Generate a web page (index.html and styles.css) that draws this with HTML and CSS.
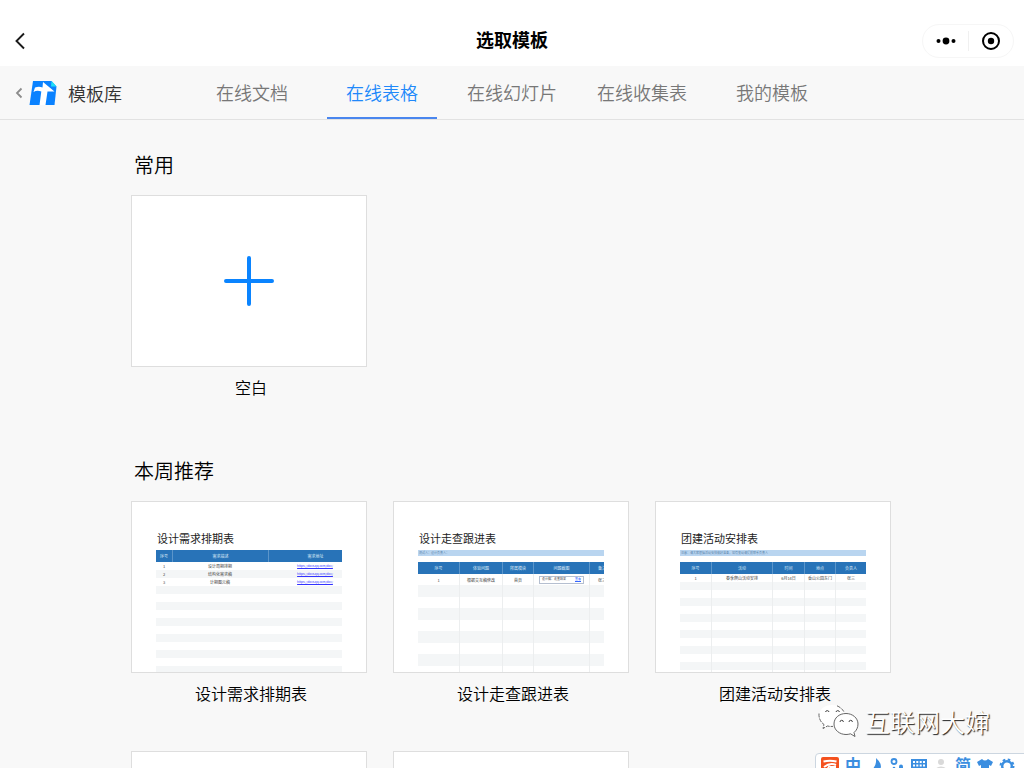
FILE: index.html
```
<!DOCTYPE html>
<html lang="zh-CN">
<head>
<meta charset="utf-8">
<meta name="viewport" content="width=device-width, initial-scale=1">
<title>选取模板</title>
<link rel="stylesheet" href="styles.css">
</head>
<body>
<div class="app">
  <header class="titlebar">
    <button class="back" type="button" aria-label="返回">
      <svg width="12" height="18" viewBox="0 0 12 18"><path d="M10 1.500L2.500 9L10 16.500" fill="none" stroke="#1a1a1a" stroke-width="1.900"/></svg>
    </button>
    <h1 class="title">选取模板</h1>
    <div class="capsule">
      <button type="button" aria-label="更多">
        <svg width="20" height="10" viewBox="0 0 20 10"><circle cx="2.500" cy="5" r="2"/><circle cx="10" cy="5" r="3.400"/><circle cx="17.500" cy="5" r="2"/></svg>
      </button>
      <button type="button" aria-label="关闭">
        <svg width="20" height="20" viewBox="0 0 20 20"><circle cx="10" cy="10" r="8" fill="none" stroke="#000" stroke-width="2"/><circle cx="10" cy="10" r="3.200"/></svg>
      </button>
    </div>
  </header>

  <nav class="tabbar">
    <a class="library" href="#">
      <svg width="8" height="12" viewBox="0 0 8 12"><path d="M6.500 1.500L2 6L6.500 10.500" fill="none" stroke="#8c8c8c" stroke-width="1.800"/></svg>
      <svg width="28" height="24" viewBox="0 0 28 24"><path d="M4 0H22.500L27.500 5.500L25.500 24H0.500Z" fill="#0a82ff"/><path d="M22.500 0L27.500 5.500H22Z" fill="#1fe0f5"/><path d="M14 1L25.500 10.500H18.500L16.500 24H10.500L12.300 10.500Q8 8.800 4.500 11L6 6.500Q10 5 13.500 6.500Z" fill="#fff"/></svg>
      <span>模板库</span>
    </a>
    <div class="tabs">
      <a class="tab" href="#">在线文档</a>
      <a class="tab active" href="#">在线表格</a>
      <a class="tab" href="#">在线幻灯片</a>
      <a class="tab" href="#">在线收集表</a>
      <a class="tab" href="#">我的模板</a>
    </div>
  </nav>

  <main class="content">
    <section class="group">
      <h2 class="heading">常用</h2>
      <div class="cards">
        <a class="card" href="#">
          <div class="thumb blank"><svg width="50" height="50" viewBox="0 0 50 50"><path d="M25 2V48M2 25H48" stroke="#0a84ff" stroke-width="4" stroke-linecap="round"/></svg></div>
          <span class="name">空白</span>
        </a>
      </div>
    </section>

    <section class="group">
      <h2 class="heading">本周推荐</h2>
      <div class="cards">
        <a class="card" href="#">
          <div class="thumb">
            <div class="sheet-title">设计需求排期表</div>
            <table class="sheet plan">
              <colgroup><col class="w16"><col class="w96"><col></colgroup>
              <thead><tr><th>序号</th><th>需求描述</th><th>需求地址</th></tr></thead>
              <tbody>
                <tr><td>1</td><td>设计周期排期</td><td><u>https://docs.qq.com/doc/</u></td></tr>
                <tr><td>2</td><td>结构化需求稿</td><td><u>https://docs.qq.com/doc/</u></td></tr>
                <tr><td>3</td><td>计期图元稿</td><td><u>https://docs.qq.com/doc/</u></td></tr>
                <tr><td></td><td></td><td></td></tr><tr><td></td><td></td><td></td></tr>
                <tr><td></td><td></td><td></td></tr><tr><td></td><td></td><td></td></tr>
                <tr><td></td><td></td><td></td></tr><tr><td></td><td></td><td></td></tr>
                <tr><td></td><td></td><td></td></tr><tr><td></td><td></td><td></td></tr>
                <tr><td></td><td></td><td></td></tr><tr><td></td><td></td><td></td></tr>
                <tr><td></td><td></td><td></td></tr>
              </tbody>
            </table>
          </div>
          <span class="name">设计需求排期表</span>
        </a>
        <a class="card" href="#">
          <div class="thumb">
            <div class="sheet-title">设计走查跟进表</div>
            <div class="note">测试人：设计负责人：</div>
            <table class="sheet lined tall">
              <colgroup><col class="w41"><col class="w43"><col class="w31"><col class="w56"><col></colgroup>
              <thead><tr><th>序号</th><th>体验问题</th><th>所属模块</th><th>问题截图</th><th>备注</th></tr></thead>
              <tbody>
                <tr><td>1</td><td>根据交互稿修改</td><td>首页</td><td><div class="shot"><span>设计稿：走查结果</span><u>查看</u></div></td><td>张三</td></tr>
                <tr><td></td><td></td><td></td><td></td><td></td></tr><tr><td></td><td></td><td></td><td></td><td></td></tr>
                <tr><td></td><td></td><td></td><td></td><td></td></tr><tr><td></td><td></td><td></td><td></td><td></td></tr>
                <tr><td></td><td></td><td></td><td></td><td></td></tr><tr><td></td><td></td><td></td><td></td><td></td></tr>
                <tr><td></td><td></td><td></td><td></td><td></td></tr><tr><td></td><td></td><td></td><td></td><td></td></tr>
              </tbody>
            </table>
          </div>
          <span class="name">设计走查跟进表</span>
        </a>
        <a class="card" href="#">
          <div class="thumb">
            <div class="sheet-title">团建活动安排表</div>
            <div class="note">注意：请大家根据活动安排做好准备，如有变动请提前联系负责人</div>
            <table class="sheet lined">
              <colgroup><col class="w31"><col class="w61"><col class="w32"><col class="w31"><col></colgroup>
              <thead><tr><th>序号</th><th>活动</th><th>时间</th><th>地点</th><th>负责人</th></tr></thead>
              <tbody>
                <tr><td>1</td><td>春季爬山活动安排</td><td>6月14日</td><td>香山公园东门</td><td>张三</td></tr>
                <tr><td></td><td></td><td></td><td></td><td></td></tr><tr><td></td><td></td><td></td><td></td><td></td></tr>
                <tr><td></td><td></td><td></td><td></td><td></td></tr><tr><td></td><td></td><td></td><td></td><td></td></tr>
                <tr><td></td><td></td><td></td><td></td><td></td></tr><tr><td></td><td></td><td></td><td></td><td></td></tr>
                <tr><td></td><td></td><td></td><td></td><td></td></tr><tr><td></td><td></td><td></td><td></td><td></td></tr>
                <tr><td></td><td></td><td></td><td></td><td></td></tr><tr><td></td><td></td><td></td><td></td><td></td></tr>
                <tr><td></td><td></td><td></td><td></td><td></td></tr><tr><td></td><td></td><td></td><td></td><td></td></tr>
              </tbody>
            </table>
          </div>
          <span class="name">团建活动安排表</span>
        </a>
        <a class="card" href="#" aria-label="模板"><div class="thumb"></div></a>
        <a class="card" href="#" aria-label="模板"><div class="thumb"></div></a>
      </div>
    </section>
  </main>

  <div class="watermark">
    <svg width="42" height="34" viewBox="0 0 42 34" fill="#fff" stroke="#555" stroke-width="0.900">
      <path d="M14 1C6.500 1 1 5.500 1 12C1 15.500 3 18.500 6 20.500L5 24.500L9.500 22C11 22.400 13 22.600 14.500 22.500C22 22.500 27 17.500 27 12C27 5.500 21 1 14 1Z" stroke="none"/>
      <path d="M1 9.500C0.600 14.500 3 18.500 6 20.500L5 24.500L9.500 22C11.500 22.500 13 22.500 15 22.400M19 1.800Q24 4 26 8" fill="none" stroke-dasharray="4 1"/>
      <path d="M28 9.500C21 9.500 16 14 16 20C16 26 21.500 30.500 28 30.500C29.500 30.500 31 30.300 32.500 29.800L37 32.500L36 28.500C38.500 26.500 40 23.500 40 20C40 14 34.500 9.500 28 9.500Z"/>
      <path d="M7.500 8A1.800 1.800 0 0 1 11 8M18 8A1.800 1.800 0 0 1 21.500 8M22 18A1.700 1.700 0 0 1 25.400 18M31 18A1.700 1.700 0 0 1 34.400 18" fill="none" stroke="#333"/>
    </svg>
    <span>互联网大婶</span>
  </div>

  <div class="ime">
    <svg width="18" height="18" viewBox="0 0 18 18"><rect width="18" height="18" rx="2" fill="#f4511e"/><path d="M2.500 4.500Q9 3 15.500 4.500M3 10Q9 5.500 15 8M8.500 8Q8 12 3 14M9 10H14Q14 13 11 14" fill="none" stroke="#fff" stroke-width="2"/></svg>
    <span>中</span>
    <svg width="16" height="18" viewBox="0 0 16 18"><path d="M9 1Q17 8 12 14Q8 18 1 14Q10 12 9 1Z"/></svg>
    <svg width="16" height="18" viewBox="0 0 16 18"><circle cx="5" cy="4.500" r="2.500" fill="none" stroke="#3b8ee0" stroke-width="1.800"/><circle cx="12" cy="9.500" r="2"/><path d="M10 10H14Q14 13 10.500 14Z"/><circle cx="5" cy="11" r="1.300"/></svg>
    <svg width="16" height="18" viewBox="0 0 16 18"><path fill-rule="evenodd" d="M0 2H16V14H0ZM2 4V6H4V4ZM5.300 4V6H7.300V4ZM8.700 4V6H10.700V4ZM12 4V6H14V4ZM2 7.500V9.500H4V7.500ZM5.300 7.500V9.500H7.300V7.500ZM8.700 7.500V9.500H10.700V7.500ZM12 7.500V9.500H14V7.500ZM4 11V12.500H12V11Z"/></svg>
    <svg width="16" height="18" viewBox="0 0 16 18"><g fill="#d9d9d9"><circle cx="8" cy="5" r="3"/><path d="M2 15Q2 9.500 8 9.500T14 15Z"/></g></svg>
    <span>简</span>
    <svg width="16" height="18" viewBox="0 0 16 18"><path d="M5 2Q8 5 11 2L16 5L14 9L12 8V16H4V8L2 9L0 5Z"/></svg>
    <svg width="16" height="18" viewBox="0 0 16 18"><circle cx="8" cy="9" r="4.800" fill="none" stroke="#3b8ee0" stroke-width="2.400"/><circle cx="8" cy="9" r="6.500" fill="none" stroke="#3b8ee0" stroke-width="2" stroke-dasharray="2.600 2.500"/></svg>
  </div>
</div>
</body>
</html>
```
FILE: styles.css
```
* { box-sizing: border-box; }
body {
  margin: 0;
  background: #f8f8f8;
  color: #000;
  font-family: "Noto Sans CJK SC", sans-serif;
  font-weight: 350;
}
a { color: inherit; text-decoration: none; }
button { border: 0; padding: 0; background: none; display: flex; align-items: center; justify-content: center; }
svg { display: block; flex: none; }
.app { height: 100vh; overflow: hidden; display: flex; flex-direction: column; position: relative; }

.titlebar {
  flex: none;
  height: 66px;
  padding: 15px 10px 0 12px;
  background: #fff;
  display: grid;
  grid-template-columns: 1fr auto 1fr;
  align-items: center;
}
.back { justify-self: start; width: 16px; height: 24px; }
.title { margin: 0; padding: 0 2px 4px 0; font-size: 18px; line-height: 24px; font-weight: 700; color: #000; }
.capsule {
  justify-self: end;
  width: 92px;
  height: 34px;
  border: 1px solid #f6f6f6;
  border-radius: 17px;
  display: grid;
  grid-template-columns: 1fr 1fr;
  align-items: center;
}
.capsule button { height: 20px; }
.capsule button + button { border-left: 1px solid #f0f0f0; }

.tabbar {
  flex: none;
  height: 54px;
  border-bottom: 1px solid #e2e2e2;
  display: flex;
}
.library {
  width: 187px;
  padding-left: 15px;
  display: flex;
  align-items: center;
  gap: 6px;
  font-size: 18px;
  color: #333;
}
.library span { padding-left: 5px; }
.tabs { display: flex; }
.tab {
  width: 110px;
  margin: 0 10px;
  border-bottom: 2px solid transparent;
  font-size: 18px;
  line-height: 52px;
  text-align: center;
  color: #777;
}
.tab.active { color: #2088fa; border-color: #4a86ee; }

.content { flex: 1; min-height: 0; overflow: hidden; padding: 30px 131px 0; }
.group { margin-bottom: 55px; }
.heading { margin: 0 0 15px; padding-left: 3px; font-size: 20px; line-height: 30px; font-weight: 350; }
.cards { display: grid; grid-template-columns: repeat(auto-fill, 236px); gap: 44px 26px; }
.card { display: flex; flex-direction: column; gap: 6px; }
.thumb { height: 172px; padding: 27px 24px 0; border: 1px solid #dedede; background: #fff; overflow: hidden; }
.blank { padding: 0; display: flex; align-items: center; justify-content: center; }
.name { padding-left: 4px; font-size: 16px; line-height: 28px; text-align: center; }

.sheet-title { height: 21px; font-size: 11px; line-height: 18px; font-weight: 400; padding-left: 1px; color: #222; }
.note { height: 6px; margin-bottom: 6px; padding-left: 1px; overflow: hidden; white-space: nowrap; background: #b9d5f0; color: #567fa8; font-size: 3px; line-height: 6px; }
.sheet { width: 100%; table-layout: fixed; border-collapse: separate; border-spacing: 0; font-size: 4px; line-height: 6px; font-weight: 400; text-align: center; color: #444; }
.sheet th, .sheet td { height: 8px; padding: 0; overflow: hidden; white-space: nowrap; }
.sheet th { height: 12px; background: #2873b8; color: #dceaf7; font-weight: 400; }
.sheet th + th { border-left: 1px solid #5b95ca; }
.sheet tbody tr:nth-child(even) { background: #f4f6f7; }
.lined td + td { border-left: 1px solid #eceeef; }
.tall td { height: 11px; }
.tall tr:nth-child(even) td { height: 12px; }
.tall th:last-child, .tall td:last-child { padding-left: 8px; text-align: left; }
.plan th:last-child, .plan td:last-child { padding-left: 20px; }
.plan td:last-child { font-size: 3px; color: #33f; }
.w16 { width: 16px; }
.w31 { width: 31px; }
.w32 { width: 32px; }
.w41 { width: 41px; }
.w43 { width: 43px; }
.w56 { width: 56px; }
.w61 { width: 61px; }
.w96 { width: 96px; }
.shot { height: 8px; margin: 0 5px; padding: 0 2px; border: 1px solid #b5bfd0; display: flex; justify-content: space-between; font-size: 3px; line-height: 5px; }
.shot u { color: #36f; }

.watermark {
  position: absolute;
  right: 34px;
  bottom: 30px;
  display: flex;
  align-items: center;
  gap: 5px;
  color: #fff;
  font-size: 25px;
  line-height: 32px;
  text-shadow: 1px 1px 1px #222;
}
.ime {
  position: absolute;
  right: -4px;
  bottom: -8px;
  width: 213px;
  height: 23px;
  padding: 3px 12px 0 5px;
  border: 1px solid #ccd6e0;
  border-radius: 4px;
  background: #fff;
  display: flex;
  justify-content: space-between;
  color: #3b8ee0;
  fill: #3b8ee0;
  font-size: 16px;
  line-height: 14px;
  font-weight: 700;
}
```
